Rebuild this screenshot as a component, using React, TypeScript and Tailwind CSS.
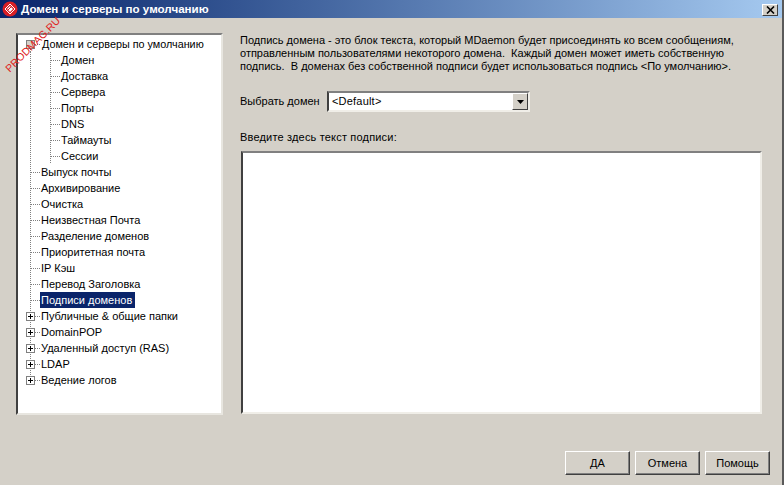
const children = ["Домен", "Доставка", "Сервера", "Порты", "DNS", "Таймауты", "Сессии"]
const items = ["Выпуск почты", "Архивирование", "Очистка", "Неизвестная Почта", "Разделение доменов", "Приоритетная почта", "IP Кэш", "Перевод Заголовка"]
const groups = ["Публичные & общие папки", "DomainPOP", "Удаленный доступ (RAS)", "LDAP", "Ведение логов"]

function Expander({ open, last }: { open?: boolean; last?: boolean }) {
  return (
    <svg width="22" height="16" className="shrink-0" shapeRendering="crispEdges">
      <path d={last ? "M12.5 0V4" : open ? "M12.5 13V16" : "M12.5 0V16"} stroke="#808080" strokeDasharray="1 1" />
      <rect x="8.5" y="4.5" width="8" height="8" fill={open ? "#d4d0c8" : "#fff"} stroke="#808080" />
      {!open && <path d="M10 8.5H15" stroke="#000" />}
      {!open && <path d="M12.5 6V11" stroke="#000" />}
      <path d="M17 8.5H22" stroke="#808080" strokeDasharray="1 1" />
    </svg>
  )
}

function Branch({ width, second }: { width: number; second?: boolean }) {
  return (
    <svg width={width} height="16" className="shrink-0" shapeRendering="crispEdges">
      <path d="M12.5 0V16" stroke="#808080" strokeDasharray="1 1" />
      {second && <path d="M32.5 0V16M33 8.5H42" stroke="#808080" strokeDasharray="1 1" />}
      {!second && <path d="M13 8.5H22" stroke="#808080" strokeDasharray="1 1" />}
    </svg>
  )
}

function Row({ label, selected }: { label: string; selected?: boolean }) {
  return (
    <span className={`h-4 pl-[1px] pr-[3px] leading-4 whitespace-nowrap ${selected ? "bg-[#0a246a] text-white" : ""}`}>{label}</span>
  )
}

function Btn({ label }: { label: string }) {
  return (
    <button className="w-[65px] h-6 border border-t-white border-l-white border-r-[#404040] border-b-[#404040] bg-[#d4d0c8] text-[11px] text-black shadow-[inset_-1px_-1px_0_#808080]">
      {label}
    </button>
  )
}

export default function App() {
  return (
    <div className="relative w-[784px] h-[485px] overflow-hidden bg-[#d4d0c8] border-r-2 border-r-[#5a5a5a] text-[11px] text-black font-['Liberation_Sans',sans-serif] flex flex-col">
      {/* Title bar */}
      <div className="h-[18px] shrink-0 flex items-center bg-gradient-to-r from-[#0a246a] to-[#a6caf0] pl-[2px] pr-[4px]">
        <svg width="16" height="16" viewBox="0 0 16 16" className="shrink-0">
          <circle cx="8" cy="8" r="7.5" fill="#d81f26" />
          <path d="M3 8l5-5 5 5-5 5z" fill="none" stroke="#fff" strokeWidth="1" />
          <path d="M5 8l3-3 3 3-3 3z" fill="#fff" />
          <path d="M4.5 10.5l6-6" stroke="#d81f26" strokeWidth="1" />
        </svg>
        <span className="ml-[3px] text-[11.6px] font-bold text-white whitespace-nowrap">Домен и серверы по умолчанию</span>
        <div className="ml-auto mt-[2px] w-4 h-3 flex items-center justify-center bg-[#d4d0c8] border border-t-white border-l-white border-r-[#404040] border-b-[#404040]">
          <svg width="9" height="8" viewBox="0 0 9 8"><path d="M1 0.5L8 7.5M8 0.5L1 7.5" stroke="#000" strokeWidth="1.6" /></svg>
        </div>
      </div>

      {/* Body */}
      <div className="flex h-[433px] shrink-0 pl-4 pt-[15px]">
        <div className="w-[207px] h-[382px] shrink-0 bg-white border-2 border-t-[#808080] border-l-[#404040] border-r-[#e8e6e0] border-b-[#e8e6e0] pt-[1px] flex flex-col">
          <div className="flex h-4 text-[10.8px]"><Expander open /><span className="w-px" /><Row label="Домен и серверы по умолчанию" /></div>
          {children.map((c) => (
            <div key={c} className="flex h-4"><Branch width={42} second /><Row label={c} /></div>
          ))}
          {items.map((c) => (
            <div key={c} className="flex h-4"><Branch width={22} /><Row label={c} /></div>
          ))}
          <div className="flex h-4"><Branch width={22} /><Row label="Подписи доменов" selected /></div>
          {groups.map((c, i) => (
            <div key={c} className="flex h-4"><Expander last={i === groups.length - 1} /><Row label={c} /></div>
          ))}
        </div>

        <div className="ml-[17px] w-[522px] flex flex-col">
          <p className="mt-[1px] leading-[13px] whitespace-pre-wrap">
            {"Подпись домена - это блок текста, который MDaemon будет присоединять ко всем сообщениям,\nотправленным пользователями некоторого домена.  Каждый домен может иметь собственную\nподпись.  В доменах без собственной подписи будет использоваться подпись <По умолчанию>."}
          </p>
          <div className="mt-[18px] flex items-center">
            <span className="w-[87px]">Выбрать домен</span>
            <div className="w-[203px] h-[21px] flex items-center bg-white border-2 border-t-[#808080] border-l-[#404040] border-r-[#f0eee8] border-b-[#f0eee8]">
              <span className="flex-1 pl-[3px] tracking-[0.2px]">{"<Default>"}</span>
              <div className="w-4 h-[17px] flex items-center justify-center bg-[#d4d0c8] border border-t-white border-l-white border-r-[#404040] border-b-[#404040]">
                <svg width="7" height="4" viewBox="0 0 7 4"><path d="M0 0H7L3.5 4z" fill="#000" /></svg>
              </div>
            </div>
          </div>
          <div className="mt-[18px] leading-[14px] tracking-[0.18px]">Введите здесь текст подписи:</div>
          <div className="mt-[7px] ml-[1px] w-[521px] h-[263px] bg-white border-2 border-t-[#808080] border-l-[#404040] border-r-[#f0eee8] border-b-[#f0eee8]" />
        </div>
      </div>

      {/* Footer */}
      <div className="h-[34px] shrink-0 flex items-start justify-end gap-[5px] pr-[12px]">
        <Btn label="ДА" />
        <Btn label="Отмена" />
        <Btn label="Помощь" />
      </div>

      <span className="absolute left-[-3px] top-[37px] -rotate-45 text-[10.5px] text-[#e02020] whitespace-nowrap">PRODMAG.RU</span>
    </div>
  )
}
